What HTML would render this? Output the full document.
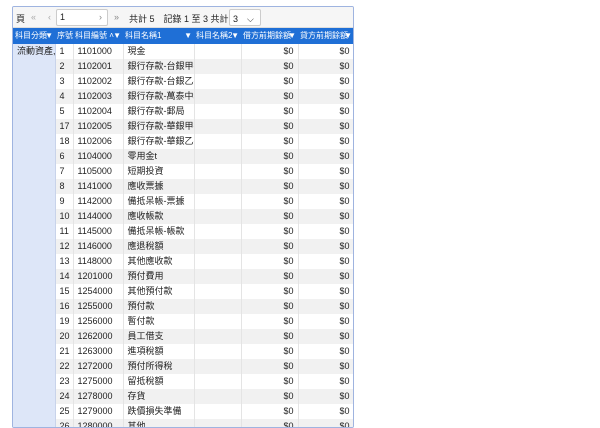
<!DOCTYPE html><html><head><meta charset="utf-8"><style>
body{margin:0;width:600px;height:413px;overflow:hidden;background:#fff;font-family:"Liberation Sans","Noto Sans CJK TC",sans-serif;font-size:9px;color:#222}
.w{position:absolute;left:12px;top:6px;width:340px;height:420px;border:1px solid #9fb4e0;border-radius:2px;overflow:hidden;background:#fff}
.tb{height:20px;background:#f6f6f6;position:relative;border-bottom:1px solid #ddd}
.tb span{position:absolute;top:5px;white-space:nowrap}
.inp{position:absolute;top:2px;height:15px;border:1px solid #ccc;background:#fff;border-radius:2px}
table{border-collapse:collapse;table-layout:fixed;position:absolute;top:21px;left:0;width:341px}
th{background:#1f6fd6;color:#fff;font-weight:normal;height:16px;box-sizing:border-box;text-align:left;padding:0 2px;white-space:nowrap;overflow:hidden;font-size:8px;position:relative;line-height:16px}
th i{position:absolute;right:2px;top:0;font-style:normal;font-size:8px}
td{height:15px;box-sizing:border-box;line-height:15px;padding:0 4px;border-right:1px solid #e4e4e4;white-space:nowrap;overflow:hidden}
tr:nth-child(odd) td.x{background:#f1f1f1}
td.r{text-align:right}
td.g{background:#dde6f8;vertical-align:top;padding-top:0;border-right:1px solid #c8d3ea}
</style></head><body><div class="w">
<div class="tb"><span style="left:3px">頁</span><span style="left:18px;color:#aaa">«</span><span style="left:35px;color:#aaa">‹</span>
<div class="inp" style="left:43px;width:50px"><span style="left:3px;top:2px">1</span></div>
<span style="left:86px;color:#888">›</span><span style="left:101px;color:#888">»</span>
<span style="left:116px">共計 5　記錄 1 至 3 共計 15</span>
<div class="inp" style="left:216px;width:30px"><span style="left:3px;top:2px">3　⌵</span></div></div>
<table><colgroup><col style="width:42px"><col style="width:18px"><col style="width:50px"><col style="width:71px"><col style="width:47px"><col style="width:57px"><col style="width:56px"></colgroup>
<tr><th>科目分類<i>▼</i></th><th>序號</th><th>科目編號 ˄<i>▼</i></th><th>科目名稱1<i>▼</i></th><th>科目名稱2<i>▼</i></th><th>借方前期餘額<i>▼</i></th><th>貸方前期餘額<i>▼</i></th></tr>
<tr><td class="g" rowspan="26">流動資產, A</td><td class="x">1</td><td class="x">1101000</td><td class="x">現金</td><td class="x"></td><td class="x r">$0</td><td class="x r">$0</td></tr>
<tr><td class="x">2</td><td class="x">1102001</td><td class="x">銀行存款-台銀甲存</td><td class="x"></td><td class="x r">$0</td><td class="x r">$0</td></tr>
<tr><td class="x">3</td><td class="x">1102002</td><td class="x">銀行存款-台銀乙存</td><td class="x"></td><td class="x r">$0</td><td class="x r">$0</td></tr>
<tr><td class="x">4</td><td class="x">1102003</td><td class="x">銀行存款-萬泰中和</td><td class="x"></td><td class="x r">$0</td><td class="x r">$0</td></tr>
<tr><td class="x">5</td><td class="x">1102004</td><td class="x">銀行存款-郵局</td><td class="x"></td><td class="x r">$0</td><td class="x r">$0</td></tr>
<tr><td class="x">17</td><td class="x">1102005</td><td class="x">銀行存款-華銀甲存</td><td class="x"></td><td class="x r">$0</td><td class="x r">$0</td></tr>
<tr><td class="x">18</td><td class="x">1102006</td><td class="x">銀行存款-華銀乙存</td><td class="x"></td><td class="x r">$0</td><td class="x r">$0</td></tr>
<tr><td class="x">6</td><td class="x">1104000</td><td class="x">零用金t</td><td class="x"></td><td class="x r">$0</td><td class="x r">$0</td></tr>
<tr><td class="x">7</td><td class="x">1105000</td><td class="x">短期投資</td><td class="x"></td><td class="x r">$0</td><td class="x r">$0</td></tr>
<tr><td class="x">8</td><td class="x">1141000</td><td class="x">應收票據</td><td class="x"></td><td class="x r">$0</td><td class="x r">$0</td></tr>
<tr><td class="x">9</td><td class="x">1142000</td><td class="x">備抵呆帳-票據</td><td class="x"></td><td class="x r">$0</td><td class="x r">$0</td></tr>
<tr><td class="x">10</td><td class="x">1144000</td><td class="x">應收帳款</td><td class="x"></td><td class="x r">$0</td><td class="x r">$0</td></tr>
<tr><td class="x">11</td><td class="x">1145000</td><td class="x">備抵呆帳-帳款</td><td class="x"></td><td class="x r">$0</td><td class="x r">$0</td></tr>
<tr><td class="x">12</td><td class="x">1146000</td><td class="x">應退稅額</td><td class="x"></td><td class="x r">$0</td><td class="x r">$0</td></tr>
<tr><td class="x">13</td><td class="x">1148000</td><td class="x">其他應收款</td><td class="x"></td><td class="x r">$0</td><td class="x r">$0</td></tr>
<tr><td class="x">14</td><td class="x">1201000</td><td class="x">預付費用</td><td class="x"></td><td class="x r">$0</td><td class="x r">$0</td></tr>
<tr><td class="x">15</td><td class="x">1254000</td><td class="x">其他預付款</td><td class="x"></td><td class="x r">$0</td><td class="x r">$0</td></tr>
<tr><td class="x">16</td><td class="x">1255000</td><td class="x">預付款</td><td class="x"></td><td class="x r">$0</td><td class="x r">$0</td></tr>
<tr><td class="x">19</td><td class="x">1256000</td><td class="x">暫付款</td><td class="x"></td><td class="x r">$0</td><td class="x r">$0</td></tr>
<tr><td class="x">20</td><td class="x">1262000</td><td class="x">員工借支</td><td class="x"></td><td class="x r">$0</td><td class="x r">$0</td></tr>
<tr><td class="x">21</td><td class="x">1263000</td><td class="x">進項稅額</td><td class="x"></td><td class="x r">$0</td><td class="x r">$0</td></tr>
<tr><td class="x">22</td><td class="x">1272000</td><td class="x">預付所得稅</td><td class="x"></td><td class="x r">$0</td><td class="x r">$0</td></tr>
<tr><td class="x">23</td><td class="x">1275000</td><td class="x">留抵稅額</td><td class="x"></td><td class="x r">$0</td><td class="x r">$0</td></tr>
<tr><td class="x">24</td><td class="x">1278000</td><td class="x">存貨</td><td class="x"></td><td class="x r">$0</td><td class="x r">$0</td></tr>
<tr><td class="x">25</td><td class="x">1279000</td><td class="x">跌價損失準備</td><td class="x"></td><td class="x r">$0</td><td class="x r">$0</td></tr>
<tr><td class="x">26</td><td class="x">1280000</td><td class="x">其他</td><td class="x"></td><td class="x r">$0</td><td class="x r">$0</td></tr>
</table></div></body></html>
